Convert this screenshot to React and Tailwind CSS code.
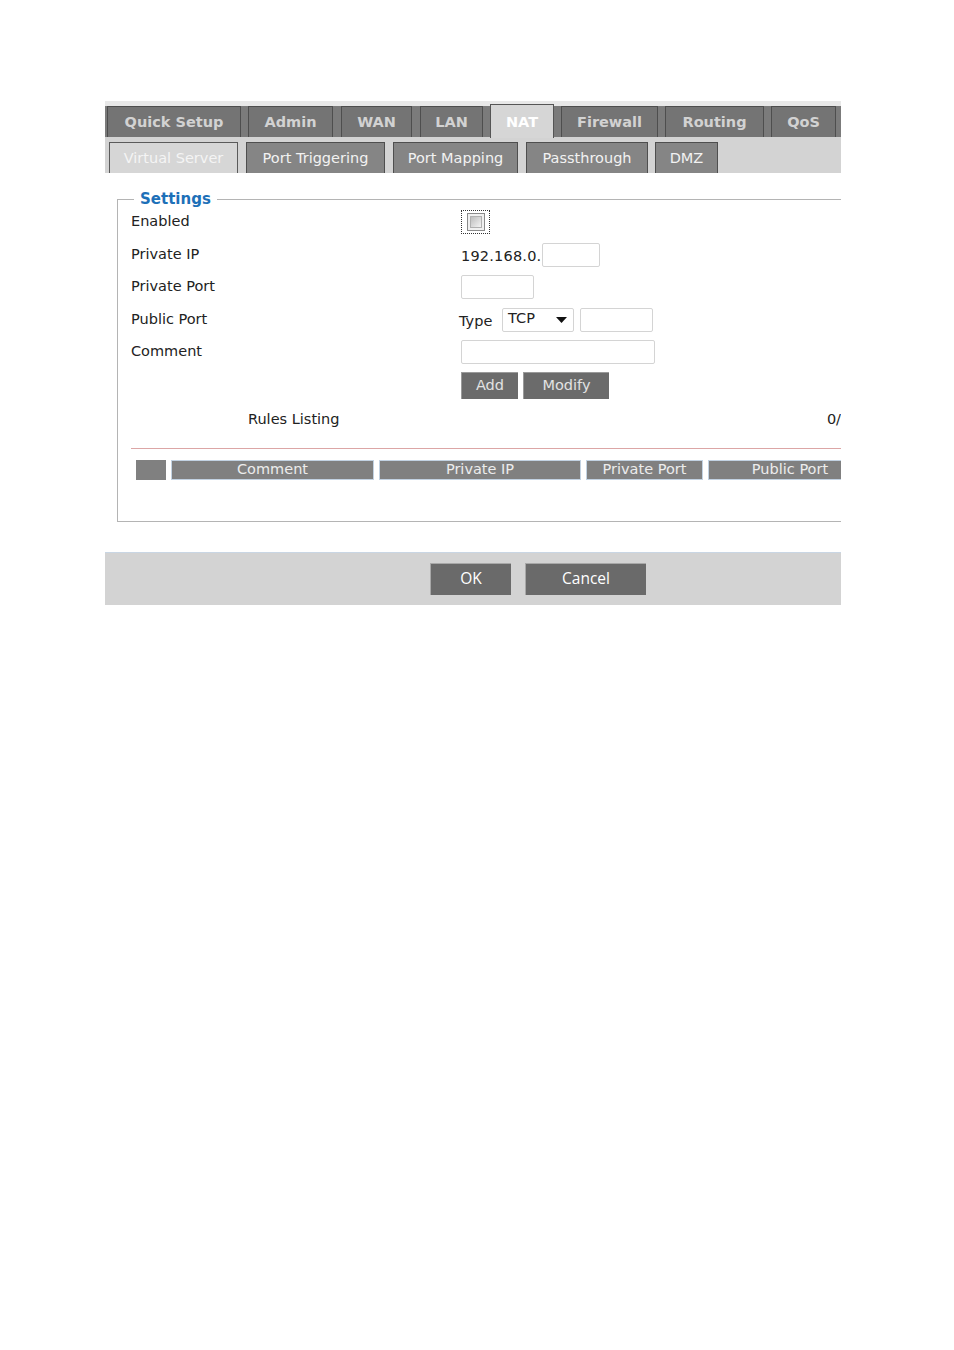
import React from 'react'

const TOP_TABS = [
  { label: 'Quick Setup', w: 'w-[134px]', ml: 'ml-[2px]' },
  { label: 'Admin', w: 'w-[85px]', ml: 'ml-[7px]' },
  { label: 'WAN', w: 'w-[71px]', ml: 'ml-[8px]' },
  { label: 'LAN', w: 'w-[63px]', ml: 'ml-[8px]' },
  { label: 'NAT', w: 'w-[64px]', ml: 'ml-[7px]', active: true },
  { label: 'Firewall', w: 'w-[97px]', ml: 'ml-[7px]' },
  { label: 'Routing', w: 'w-[99px]', ml: 'ml-[7px]' },
  { label: 'QoS', w: 'w-[65px]', ml: 'ml-[7px]' },
]

const SUB_TABS = [
  { label: 'Virtual Server', w: 'w-[129px]', ml: 'ml-[4px]', active: true },
  { label: 'Port Triggering', w: 'w-[139px]', ml: 'ml-[8px]' },
  { label: 'Port Mapping', w: 'w-[125px]', ml: 'ml-[8px]' },
  { label: 'Passthrough', w: 'w-[122px]', ml: 'ml-[8px]' },
  { label: 'DMZ', w: 'w-[63px]', ml: 'ml-[7px]' },
]

const verdana = 'font-["DejaVu_Sans",Verdana,sans-serif]'

function Field({ className = '' }) {
  return <div className={`h-[24px] border border-[#d4d4d4] rounded-[2px] bg-white ${className}`} />
}

function Row({ label, children }) {
  return (
    <div className="flex items-center h-[32.5px]">
      <div className="w-[330px] text-[14.5px] text-[#222]">{label}</div>
      <div className="flex items-center">{children}</div>
    </div>
  )
}

export default function App() {
  return (
    <div className={`min-h-[1350px] bg-white pt-[101px] pl-[105px] ${verdana}`}>
      <div className="w-[736px] overflow-hidden">
        {/* main tabs */}
        <div className="h-[5px] bg-[#e8e8e8]" />
        <div className="flex items-end h-[31px] bg-[#7b7b7b]">
          {TOP_TABS.map(t => (
            <div
              key={t.label}
              className={`${t.w} ${t.ml} shrink-0 flex items-center justify-center pt-[2px] font-bold text-[14.5px] ${t.active ? 'h-[34px] -mb-[1px] bg-[#d6d6d6] text-white border border-b-0 border-[#555]' : 'h-[31px] bg-[#747474] text-[#d2d2d2] border border-b-0 border-[#4e4e4e]'}`}
            >
              {t.label}
            </div>
          ))}
        </div>
        {/* sub tabs */}
        <div className="flex items-end h-[36px] bg-[#d3d3d3]">
          {SUB_TABS.map(t => (
            <div
              key={t.label}
              className={`${t.w} ${t.ml} shrink-0 h-[31px] flex items-center justify-center pt-[2px] text-[14.5px] border border-b-0 ${t.active ? 'bg-[#d6d6d6] text-[#f4f4f4] border-[#5a5a5a]' : 'bg-[#858585] text-[#f2f2f2] border-[#4e4e4e]'}`}
            >
              {t.label}
            </div>
          ))}
        </div>

        {/* settings */}
        <fieldset className="mt-[21px] ml-[12px] w-[760px] border border-[#b4b4b4] pl-[13px] pt-[2px] pb-[41px]">
          <legend className="ml-[3px] px-[6px] text-[15px] font-bold leading-[10px] text-[#1d70b8]">Settings</legend>
          <Row label="Enabled">
            <div className="w-[29px] h-[24px] border border-dotted border-[#333] flex items-center justify-center">
              <div className="w-[18px] h-[18px] border border-[#8a8a8a] bg-[#f0f0f0] flex items-center justify-center">
                <div className="w-[12px] h-[12px] border border-[#b0b0b0] bg-gradient-to-br from-[#bdbdbd] to-[#f4f4f4]" />
              </div>
            </div>
          </Row>
          <Row label="Private IP">
            <span className="w-[81px] text-[14.5px] text-[#222] mt-[4px] tracking-[0.2px]">192.168.0.</span>
            <Field className="w-[58px]" />
          </Row>
          <Row label="Private Port">
            <Field className="w-[73px]" />
          </Row>
          <Row label="Public Port">
            <span className="-ml-[2px] w-[43px] mt-[4px] text-[14.5px] text-[#222]">Type</span>
            <div className="w-[72px] h-[24px] border border-[#d4d4d4] rounded-[2px] flex items-center justify-between pl-[5px] pr-[6px] text-[14.5px] text-[#222]">
              <span className="-mt-[2px]">TCP</span>
              <svg width="11" height="6" viewBox="0 0 11 6"><path d="M0 0h11L5.5 6z" fill="#111" /></svg>
            </div>
            <Field className="w-[73px] ml-[6px]" />
          </Row>
          <Row label="Comment">
            <Field className="w-[194px]" />
          </Row>
          <div className="flex items-center h-[33px] pl-[330px]">
            <button className="w-[57px] h-[27px] bg-[#6b6b6b] text-[#e2e2e2] text-[14.5px] border-t border-l border-[#9a9a9a]">Add</button>
            <button className="w-[86px] h-[27px] ml-[5px] bg-[#6b6b6b] text-[#e2e2e2] text-[14.5px] border-t border-l border-[#9a9a9a]">Modify</button>
          </div>
          <div className="flex items-center h-[36px] text-[14.5px] text-[#222] w-[710px]">
            <span className="ml-[117px]">Rules Listing</span>
            <span className="ml-auto">0/</span>
          </div>
          <div className="mt-[10px] border-t border-[#dca6a6]" />
          <div className="mt-[11px] ml-[5px] flex h-[20px] text-[14.5px] text-[#ececec]">
            <div className="w-[30px] bg-[#808080]" />
            <div className="w-[203px] ml-[5px] bg-[#808080] border border-[#c2d2e2] flex items-center justify-center">Comment</div>
            <div className="w-[202px] ml-[5px] bg-[#808080] border border-[#c2d2e2] flex items-center justify-center">Private IP</div>
            <div className="w-[117px] ml-[5px] bg-[#808080] border border-[#c2d2e2] flex items-center justify-center">Private Port</div>
            <div className="w-[164px] shrink-0 ml-[5px] bg-[#808080] border border-[#c2d2e2] flex items-center justify-center">Public Port</div>
          </div>
        </fieldset>

        {/* footer */}
        <div className="mt-[30px] h-[53px] bg-[#d3d3d3] border-t border-[#c9d6e4] flex items-center pl-[325px] font-['Open_Sans','Noto_Sans',sans-serif]">
          <button className="w-[81px] h-[32px] bg-[#6a6a6a] text-white text-[15.5px] border-t border-l border-[#a8a8a8]">OK</button>
          <button className="w-[121px] h-[32px] ml-[14px] bg-[#6a6a6a] text-white text-[15.5px] border-t border-l border-[#a8a8a8]">Cancel</button>
        </div>
      </div>
    </div>
  )
}
